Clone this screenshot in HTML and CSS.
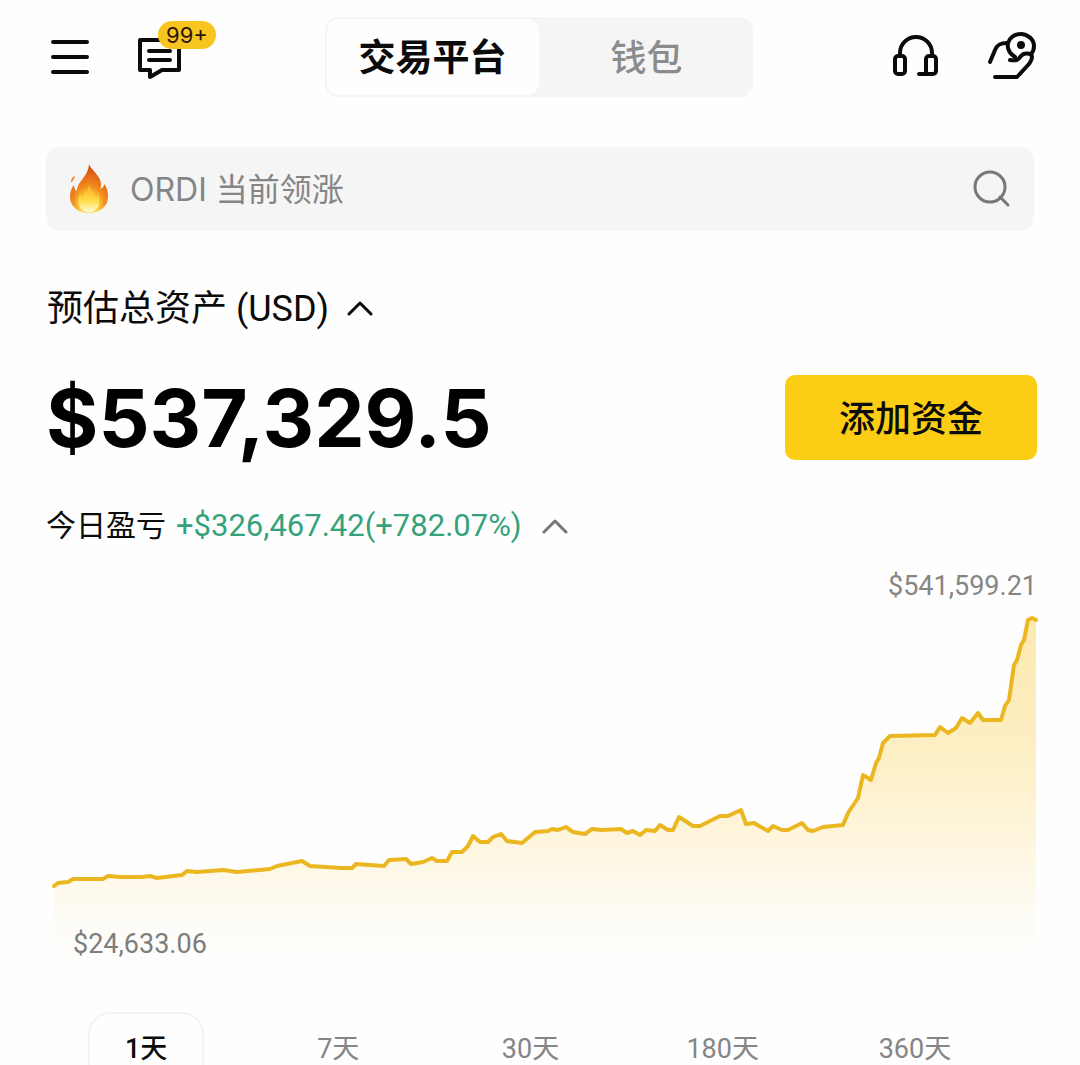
FILE: index.html
```html
<!DOCTYPE html>
<html lang="zh-CN">
<head>
    <meta charset="UTF-8">
    <meta name="viewport" content="width=device-width, initial-scale=1.0">
    <title>交易平台</title>
    <link rel="stylesheet" href="styles.css">
</head>
<body>
    <div class="app">
        <header class="topbar">
            <div class="icons icons-left">
                <button class="icon-btn" type="button" aria-label="菜单">
                    <svg width="38" height="48" viewBox="0 0 38 48">
                        <path d="M3 9h34M3 24h34M3 39h34" stroke-width="4"/>
                    </svg>
                </button>
                <button class="icon-btn" type="button" aria-label="消息">
                    <svg width="48" height="48" viewBox="0 0 48 48">
                        <path d="M4 7h39v30H26l-12 7v-7H4z" stroke-width="4"/>
                        <path d="M13 18h21M13 27h21" stroke-width="4"/>
                    </svg>
                    <span class="badge">99+</span>
                </button>
            </div>
            <div class="switch">
                <button class="switch-item active" type="button">交易平台</button>
                <button class="switch-item" type="button">钱包</button>
            </div>
            <div class="icons icons-right">
                <button class="icon-btn" type="button" aria-label="客服">
                    <svg width="46" height="48" viewBox="0 0 46 48">
                        <path d="M7 22v-2a16 16 0 0 1 32 0v2" stroke-width="4"/>
                        <rect x="2" y="23" width="10" height="18" rx="3" stroke-width="4"/>
                        <path d="M26 41h14a3 3 0 0 0 3-3V26a3 3 0 0 0-3-3h-4a3 3 0 0 0-3 3v15" stroke-width="4"/>
                    </svg>
                </button>
                <button class="icon-btn" type="button" aria-label="赚币">
                    <svg width="48" height="48" viewBox="0 0 48 48">
                        <path d="M1 29l5-12c2-5 5-7 12-7" stroke-width="4"/>
                        <path d="M26 24c-6-4-8-9-7-14 2-6 7-9 13-9s13 5 13 12c0 3-1 6-3 8" stroke-width="4"/>
                        <circle cx="32" cy="12" r="2" fill="#000" stroke-width="4"/>
                        <path d="M21 27c7 1 8 0 11-4 3-4 11-3 11 1 0 3-1 4-3 7L28 44H6" stroke-width="4"/>
                    </svg>
                </button>
            </div>
        </header>

        <form class="search">
            <svg class="fire" width="40" height="50" viewBox="0 0 40 50">
                <defs>
                    <radialGradient id="flame" cx="50%" cy="88%" r="75%">
                        <stop offset="0" stop-color="#fff6b0"/>
                        <stop offset="0.3" stop-color="#ffcf3a"/>
                        <stop offset="0.6" stop-color="#f08a1c"/>
                        <stop offset="1" stop-color="#dc5716"/>
                    </radialGradient>
                    <linearGradient id="core" x1="0" y1="0" x2="0" y2="1">
                        <stop offset="0" stop-color="#ffae22"/>
                        <stop offset="0.6" stop-color="#ffdc45"/>
                        <stop offset="1" stop-color="#fffbdc"/>
                    </linearGradient>
                </defs>
                <path d="M20 0c2 6 12 12 12 20 0 2 0 4-1 5 3-1 4-3 4-5 3 3 4 8 4 13 0 9-8 16-19 16S1 42 1 33c0-5 2-10 4-12 0 3 1 5 3 6 0-10 11-13 12-27z" fill="url(#flame)"/>
                <path d="M2 18c0-3 1-5 4-6 0 2-2 4-3 6z" fill="#ef8a25"/>
                <path d="M20 20c1 6 6 8 6 14 2-1 3-3 3-5 3 9 1 19-9 19S7 39 11 29c1 2 1 4 3 4 1-5 6-7 6-13z" fill="url(#core)"/>
            </svg>
            <input class="search-input" type="text" aria-label="搜索" placeholder="ORDI 当前领涨">
            <button class="search-btn" type="submit" aria-label="搜索">
                <svg width="38" height="38" viewBox="0 0 38 38">
                    <circle cx="17" cy="17" r="15" stroke-width="3"/>
                    <path d="M27 27l8 8" stroke-width="3"/>
                </svg>
            </button>
        </form>

        <main>
            <h1 class="title">
                预估总资产 (USD)
                <svg width="26" height="16" viewBox="0 0 26 16">
                    <path d="M2 13L13 2l11 11" stroke-width="3"/>
                </svg>
            </h1>

            <div class="balance">
                <span class="amount">$537,329.5</span>
                <button class="add-btn" type="button">添加资金</button>
            </div>

            <div class="pnl">
                <span>今日盈亏</span>
                <span class="up">+$326,467.42(+782.07%)</span>
                <svg width="26" height="16" viewBox="0 0 26 16">
                    <path d="M2 14L13 3l11 11" stroke-width="3"/>
                </svg>
            </div>

            <div class="max">$541,599.21</div>
            <div class="chart">
                <svg viewBox="46 602 991 358">
                    <defs>
                        <linearGradient id="area" gradientUnits="userSpaceOnUse" x1="0" y1="618" x2="0" y2="960">
                            <stop offset="0" stop-color="#fde9b0"/>
                            <stop offset="0.4" stop-color="#fdefc5"/>
                            <stop offset="0.7" stop-color="#fef7e3"/>
                            <stop offset="0.9" stop-color="#fdfcf8"/>
                            <stop offset="1" stop-color="#fdfdfc"/>
                        </linearGradient>
                    </defs>
                    <polygon fill="url(#area)" points="54,960 54,886 58,883 68,882 73,879 103,879 108,876 120,877 142,877 150,876 157,878 182,875 187,871 197,872 223,870 237,872 270,869 277,866 302,861 310,866 342,868 352,868 356,864 384,866 389,860 406,859 411,864 423,862 432,858 437,861 447,861 452,852 462,852 468,846 473,836 480,842 488,842 493,837 501,834 507,841 522,843 535,832 548,831 552,829 558,830 566,827 573,832 585,834 592,829 602,830 621,829 627,833 633,831 640,835 646,830 655,831 660,825 668,830 673,830 679,817 693,826 700,826 720,816 728,816 741,810 746,824 754,823 768,831 773,826 782,830 788,830 802,823 808,830 813,831 823,827 843,825 848,813 858,798 863,775 871,780 876,763 879,758 883,743 890,736 935,735 940,727 948,733 956,728 962,718 970,723 978,713 983,720 1001,720 1005,706 1009,700 1014,665 1017,660 1021,645 1024,640 1028,620 1032,618 1036,620 1036,960"/>
                    <polyline class="line" points="54,886 58,883 68,882 73,879 103,879 108,876 120,877 142,877 150,876 157,878 182,875 187,871 197,872 223,870 237,872 270,869 277,866 302,861 310,866 342,868 352,868 356,864 384,866 389,860 406,859 411,864 423,862 432,858 437,861 447,861 452,852 462,852 468,846 473,836 480,842 488,842 493,837 501,834 507,841 522,843 535,832 548,831 552,829 558,830 566,827 573,832 585,834 592,829 602,830 621,829 627,833 633,831 640,835 646,830 655,831 660,825 668,830 673,830 679,817 693,826 700,826 720,816 728,816 741,810 746,824 754,823 768,831 773,826 782,830 788,830 802,823 808,830 813,831 823,827 843,825 848,813 858,798 863,775 871,780 876,763 879,758 883,743 890,736 935,735 940,727 948,733 956,728 962,718 970,723 978,713 983,720 1001,720 1005,706 1009,700 1014,665 1017,660 1021,645 1024,640 1028,620 1032,618 1036,620"/>
                </svg>
                <span class="min">$24,633.06</span>
            </div>

            <div class="periods">
                <button class="period active" type="button">1天</button>
                <button class="period" type="button">7天</button>
                <button class="period" type="button">30天</button>
                <button class="period" type="button">180天</button>
                <button class="period" type="button">360天</button>
            </div>
        </main>
    </div>
</body>
</html>
```
FILE: styles.css
```css
* {
    box-sizing: border-box;
}

body {
    margin: 0;
    background-color: #fefefe;
    color: #0b0b0b;
    font-family: Roboto, "Noto Sans CJK SC", sans-serif;
}

button,
input {
    font-family: inherit;
    color: inherit;
    border: none;
    background: none;
    padding: 0;
    margin: 0;
}

button {
    cursor: pointer;
}

svg {
    display: block;
    flex-shrink: 0;
    fill: none;
    stroke: #0b0b0b;
    stroke-linecap: round;
    stroke-linejoin: round;
}

.app {
    height: 100vh;
    overflow: hidden;
    padding: 17px 43px 0 46px;
}

/* top bar */
.topbar {
    display: flex;
    align-items: center;
    justify-content: space-between;
    height: 80px;
}

.icons {
    display: flex;
    align-items: center;
    gap: 48px;
}

.icons-left {
    padding-left: 4px;
}

.icons-right {
    gap: 50px;
}

.icon-btn {
    position: relative;
}

.icon-btn svg {
    overflow: visible;
}

.badge {
    position: absolute;
    top: -12px;
    left: 22px;
    width: 58px;
    border-radius: 14px;
    background-color: #f8c51f;
    color: #2b1407;
    font-family: Inter, sans-serif;
    font-size: 22px;
    line-height: 28px;
}

.switch {
    display: flex;
    width: 428px;
    height: 80px;
    border-radius: 14px;
    background-color: #f5f5f5;
}

.switch-item {
    flex: 1;
    padding-bottom: 4px;
    border-radius: 14px;
    color: #8c8c8c;
    font-size: 36px;
    font-weight: 500;
}

.switch-item.active {
    border: 2px solid #f5f5f5;
    background-color: #fefefe;
    color: #0b0b0b;
    font-size: 37px;
    font-weight: 700;
}

/* search */
.search {
    display: flex;
    align-items: center;
    height: 84px;
    margin: 50px 3px 0 0;
    padding: 0 23px;
    border-radius: 14px;
    background-color: #f5f5f5;
}

.fire {
    stroke: none;
}

.search-input {
    flex: 1;
    min-width: 0;
    margin-left: 21px;
    font-family: Inter, "Noto Sans CJK SC", sans-serif;
    font-size: 32px;
    outline: none;
}

.search-input::placeholder {
    color: #858585;
    opacity: 1;
}

.search-btn svg {
    stroke: #777;
}

/* assets */
.title {
    display: flex;
    align-items: center;
    gap: 18px;
    margin: 56px 0 0 1px;
    font-size: 36px;
    font-weight: 400;
    line-height: 44px;
}

.balance {
    display: flex;
    align-items: center;
    justify-content: space-between;
    margin-top: 44px;
}

.amount {
    font-family: Inter, sans-serif;
    font-size: 80px;
    font-weight: 700;
    line-height: 84px;
    color: #000;
}

.add-btn {
    width: 252px;
    height: 85px;
    padding-bottom: 4px;
    border-radius: 10px;
    background-color: #fccd15;
    font-size: 36px;
    font-weight: 500;
}

.pnl {
    display: flex;
    align-items: center;
    margin-top: 46px;
    font-size: 30px;
    line-height: 40px;
}

.pnl .up {
    margin: 0 20px 0 10px;
    color: #35a27c;
    font-size: 31px;
}

.pnl svg {
    stroke: #777;
}

/* chart */
.max {
    margin-top: 24px;
    color: #858585;
    font-size: 27px;
    line-height: 32px;
    text-align: right;
}

.chart {
    position: relative;
}

.chart svg {
    width: 100%;
    stroke: none;
    overflow: visible;
}

.chart .line {
    stroke: #ebb721;
    stroke-width: 4;
}

.min {
    position: absolute;
    left: 27px;
    bottom: 0;
    color: #7d7d7d;
    font-size: 27px;
    line-height: 32px;
}

.periods {
    display: grid;
    grid-template-columns: repeat(5, 1fr);
    justify-items: center;
    margin: 52px 26px 0 4px;
}

.period {
    min-width: 116px;
    height: 72px;
    padding-bottom: 4px;
    border: 2px solid transparent;
    border-radius: 22px;
    color: #858585;
    font-size: 27px;
}

.period.active {
    border-color: #f3f3f3;
    color: #0b0b0b;
    font-weight: 500;
}
```
